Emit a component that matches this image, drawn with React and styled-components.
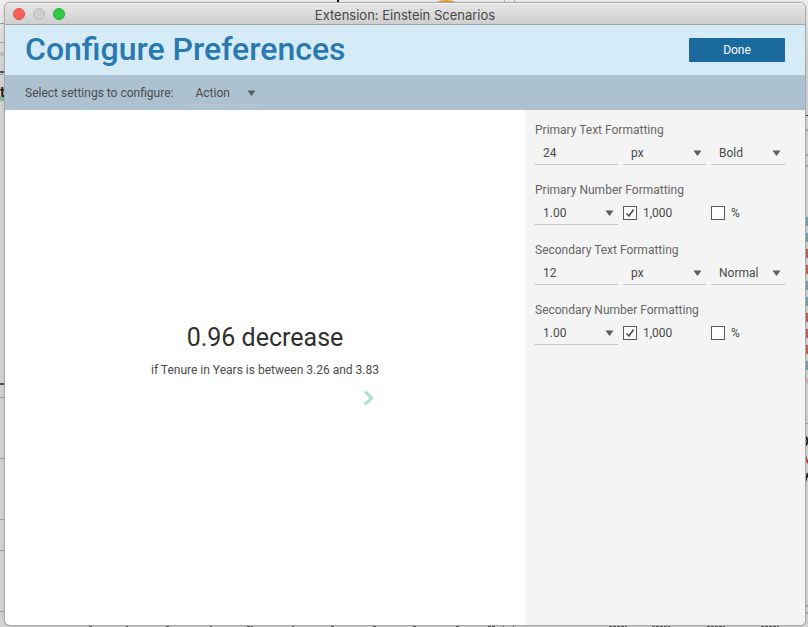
import React, { useState } from "react";
import styled, { createGlobalStyle } from "styled-components";

const GlobalStyle = createGlobalStyle`
  *, *::before, *::after { box-sizing: border-box; }
  body {
    margin: 0;
    font-family: Roboto, "Liberation Sans", sans-serif;
    font-size: 12px;
    line-height: 20px;
    color: #4b4b4b;
  }
  button, input, select { font: inherit; color: inherit; }
`;

const Desktop = styled.div`
  position: relative;
  display: flex;
  min-height: 100vh;
  padding: 3px 3px 2px 5px;
  background: linear-gradient(#ededed, #d2d2d2 60px);
  overflow: hidden;
`;

const Backdrop = styled.svg`
  position: absolute;
  top: ${(p) => (p.$edge === "bottom" ? "auto" : 0)};
  bottom: ${(p) => (p.$edge === "bottom" ? 0 : "auto")};
  left: ${(p) => (p.$edge === "right" ? "auto" : 0)};
  right: ${(p) => (p.$edge === "right" ? 0 : "auto")};
`;

const Window = styled.main`
  position: relative;
  display: flex;
  flex: 1;
  flex-direction: column;
  min-width: 0;
  border-radius: 5px;
  background: #fff;
  box-shadow: 0 0 0 1px #aaa, 0 0 3px rgba(0, 0, 0, 0.3);
  overflow: hidden;
`;

const TitleBar = styled.div`
  display: grid;
  grid-template-columns: 1fr auto 1fr;
  align-items: center;
  height: 22px;
  padding: 0 8px;
  border-bottom: 1px solid #aaa5a2;
  background: linear-gradient(#e6e6e6, #cfcfcf);
  box-shadow: inset 0 1px #f4f4f4;
`;

const WindowTitle = styled.span`
  padding-top: 2px;
  font-family: Inter, sans-serif;
  font-size: 13px;
  line-height: 20px;
  color: #484848;
`;

const Lights = styled.div`
  display: flex;
  gap: 8px;
`;

const Light = styled.button`
  width: 12px;
  height: 12px;
  padding: 0;
  border: 1px solid ${(p) => p.$rim};
  border-radius: 50%;
  background: ${(p) => p.$fill};
`;

const Header = styled.header`
  display: flex;
  align-items: center;
  justify-content: space-between;
  height: 50px;
  padding: 0 20px;
  background: #d6ebf8;
`;

const Heading = styled.h1`
  margin: 0;
  padding-bottom: 2px;
  font-size: 32px;
  font-weight: 500;
  line-height: 40px;
  color: #2878b1;
`;

const DoneButton = styled.button`
  width: 96px;
  height: 24px;
  padding: 0;
  border: 0;
  border-radius: 1px;
  background: #1a699f;
  color: #fff;
`;

const SettingsBar = styled.div`
  display: flex;
  align-items: center;
  gap: 14px;
  height: 35px;
  padding: 0 20px;
  background: #adc2d0;
`;

const Body = styled.div`
  display: flex;
  flex: 1;
`;

const Preview = styled.section`
  display: flex;
  flex: 1;
  align-items: center;
  justify-content: center;
`;

const Insight = styled.div`
  display: flex;
  flex-direction: column;
  gap: 6px;
`;

const Primary = styled.div`
  margin-bottom: 4px;
  font-size: 25px;
  line-height: 24px;
  text-align: center;
  color: #303030;
`;

const Secondary = styled.div`
  text-align: center;
`;

const NextButton = styled.button`
  display: flex;
  align-self: flex-end;
  padding: 0;
  border: 0;
  background: none;
`;

const Panel = styled.aside`
  width: 280px;
  padding: 10px 20px 10px 10px;
  background: #f4f4f4;
`;

const Group = styled.fieldset`
  min-width: 0;
  margin: 0 0 15px;
  padding: 0;
  border: 0;
`;

const Legend = styled.legend`
  padding: 0;
  color: #666;
`;

const Fields = styled.div`
  display: grid;
  grid-template-columns: 83px 83px 1fr;
  gap: 5px;
  height: 25px;
`;

const TextInput = styled.input`
  width: 100%;
  height: 25px;
  padding: 2px 8px 0;
  border: 0;
  border-bottom: 1px solid #c6c6c6;
  border-radius: 0;
  background: transparent;
`;

const SelectBox = styled.div`
  display: grid;
  align-items: center;
  width: ${(p) => p.$width || "auto"};
  height: 25px;
  border-bottom: 1px solid #c6c6c6;

  > * { grid-area: 1 / 1; }
`;

const NativeSelect = styled.select`
  width: 100%;
  height: 24px;
  padding: 2px 20px 0 8px;
  border: 0;
  background: transparent;
  appearance: none;
`;

const Arrow = styled.svg`
  justify-self: end;
  margin: 2px 4px 0 0;
  pointer-events: none;
`;

const CheckLabel = styled.label`
  display: flex;
  align-items: center;
  gap: 6px;
`;

const CheckBox = styled.span`
  display: grid;
  width: 14px;
  height: 14px;

  > * { grid-area: 1 / 1; }
`;

const CheckInput = styled.input`
  width: 14px;
  height: 14px;
  margin: 0;
  border: 1px solid #5c5c5c;
  background: #fff;
  appearance: none;
`;

const Tick = styled.svg`
  pointer-events: none;
`;

function Select({ label, id, options, width }) {
  return (
    <SelectBox $width={width}>
      <NativeSelect id={id} aria-label={label} defaultValue={options[0]}>
        {options.map((o) => <option key={o}>{o}</option>)}
      </NativeSelect>
      <Arrow width="9" height="6" viewBox="0 0 9 6" aria-hidden="true">
        <path d="M0.5 0.5h8L4.5 6z" fill="#5c5c5c" />
      </Arrow>
    </SelectBox>
  );
}

function Check({ label, initial = false }) {
  const [on, setOn] = useState(initial);
  return (
    <CheckLabel>
      <CheckBox>
        <CheckInput type="checkbox" checked={on} onChange={(e) => setOn(e.target.checked)} />
        {on && (
          <Tick width="14" height="14" viewBox="0 0 14 14" aria-hidden="true">
            <path d="M3.5 7.5L6 10l4.5-6.5" fill="none" stroke="#4b4b4b" strokeWidth="1.6" />
          </Tick>
        )}
      </CheckBox>
      {label}
    </CheckLabel>
  );
}

function TextFormatting({ name, size, weight, otherWeight }) {
  return (
    <Group>
      <Legend>{name} Text Formatting</Legend>
      <Fields>
        <TextInput aria-label={`${name} text size`} defaultValue={size} />
        <Select label={`${name} text unit`} options={["px", "em"]} />
        <Select label={`${name} text weight`} options={[weight, otherWeight]} />
      </Fields>
    </Group>
  );
}

function NumberFormatting({ name }) {
  return (
    <Group>
      <Legend>{name} Number Formatting</Legend>
      <Fields>
        <Select label={`${name} decimals`} options={["1.00", "1.0", "1"]} />
        <Check label="1,000" initial />
        <Check label="%" />
      </Fields>
    </Group>
  );
}

const STRIPES = [
  [217, "#74a1a8"], [233, "#74a1a8"], [249, "#c95b5b"], [265, "#c95b5b"],
  [281, "#74a1a8"], [297, "#74a1a8"], [313, "#c95b5b"], [329, "#c95b5b"],
  [345, "#c95b5b"], [361, "#74a1a8"],
];

function DesktopBehind() {
  return (
    <>
      <Backdrop width="520" height="4" aria-hidden="true">
        <path d="M338 0v4" stroke="#000" strokeWidth="2" />
        <path d="M504.500 0v4M514.500 0v4" stroke="#b8b8b8" />
        <ellipse cx="446" cy="10" rx="15" ry="9" fill="none" stroke="#e29a2e" strokeWidth="2" />
      </Backdrop>
      <Backdrop width="5" height="627" aria-hidden="true">
        <path d="M0 23.500h5M0 42.500h5M0 397.500h5M0 458.500h5M0 519.500h5M0 550.500h5M0 611.500h5" stroke="#a0a0a0" />
        <path d="M0 54h5" stroke="#bdbdbd" strokeWidth="4" />
        <path d="M0 72h5M0 384h5" stroke="#505050" strokeWidth="2" />
        <path d="M0 74.500h3" stroke="#8292ae" />
        <path d="M0 98.500h5" stroke="#82b698" strokeWidth="5" />
        <text x="0" y="97" fontSize="14" fontWeight="700" fill="#222">t</text>
      </Backdrop>
      <Backdrop $edge="right" width="3" height="627" aria-hidden="true">
        <path d="M0 115.500h3" stroke="#444" />
        <path d="M0 130h3M0 155h3M0 166h3M0 606h3M0 613h3" stroke="#a8a8a8" strokeWidth="2" />
        <path d="M0 423.500h3" stroke="#a0a0a0" />
        {STRIPES.map(([y, fill]) => <rect key={y} y={y} width="3" height="9" fill={fill} />)}
        <path d="M0 376l3 7" stroke="#cf9494" />
        <path d="M0 437h1q3 4 0 8h-1" fill="none" stroke="#222" strokeWidth="2" />
        <path d="M0 456l3 7" stroke="#c33" strokeWidth="2" />
        <path d="M0 482l3-9" stroke="#222" strokeWidth="2" />
      </Backdrop>
      <Backdrop $edge="bottom" width="808" height="2" aria-hidden="true">
        <path
          d="M89 1h3M126 1h2M166 1h4M210 1h2M247 1h6M292 1h2M331 1h4M373 1h3M413 1h4M456 1h3M488 1h8M503 1h1M513 1h1M609 1h18M652 1h18M707 1h18M761 1h18"
          stroke="#5c5c5c" strokeWidth="2" strokeDasharray="3 1"
        />
      </Backdrop>
    </>
  );
}

export default function App() {
  return (
    <Desktop>
      <GlobalStyle />
      <DesktopBehind />
      <Window>
        <TitleBar>
          <Lights>
            <Light aria-label="Close" $fill="#fc605b" $rim="#e24b46" />
            <Light aria-label="Minimize" $fill="#cfcfcf" $rim="#b9b9b9" />
            <Light aria-label="Zoom" $fill="#2fcb45" $rim="#22ae34" />
          </Lights>
          <WindowTitle>Extension: Einstein Scenarios</WindowTitle>
        </TitleBar>
        <Header>
          <Heading>Configure Preferences</Heading>
          <DoneButton>Done</DoneButton>
        </Header>
        <SettingsBar>
          <label htmlFor="settings">Select settings to configure:</label>
          <Select id="settings" options={["Action", "Text"]} width="73px" />
        </SettingsBar>
        <Body>
          <Preview>
            <Insight>
              <Primary>0.96 decrease</Primary>
              <Secondary>if Tenure in Years is between 3.26 and 3.83</Secondary>
              <NextButton aria-label="Next">
                <svg width="24" height="24" viewBox="0 0 24 24" aria-hidden="true">
                  <path d="M10 5.500l6.500 6.500L10 18.500" fill="none" stroke="#a5e3c7" strokeWidth="3" />
                </svg>
              </NextButton>
            </Insight>
          </Preview>
          <Panel>
            <TextFormatting name="Primary" size="24" weight="Bold" otherWeight="Normal" />
            <NumberFormatting name="Primary" />
            <TextFormatting name="Secondary" size="12" weight="Normal" otherWeight="Bold" />
            <NumberFormatting name="Secondary" />
          </Panel>
        </Body>
      </Window>
    </Desktop>
  );
}
